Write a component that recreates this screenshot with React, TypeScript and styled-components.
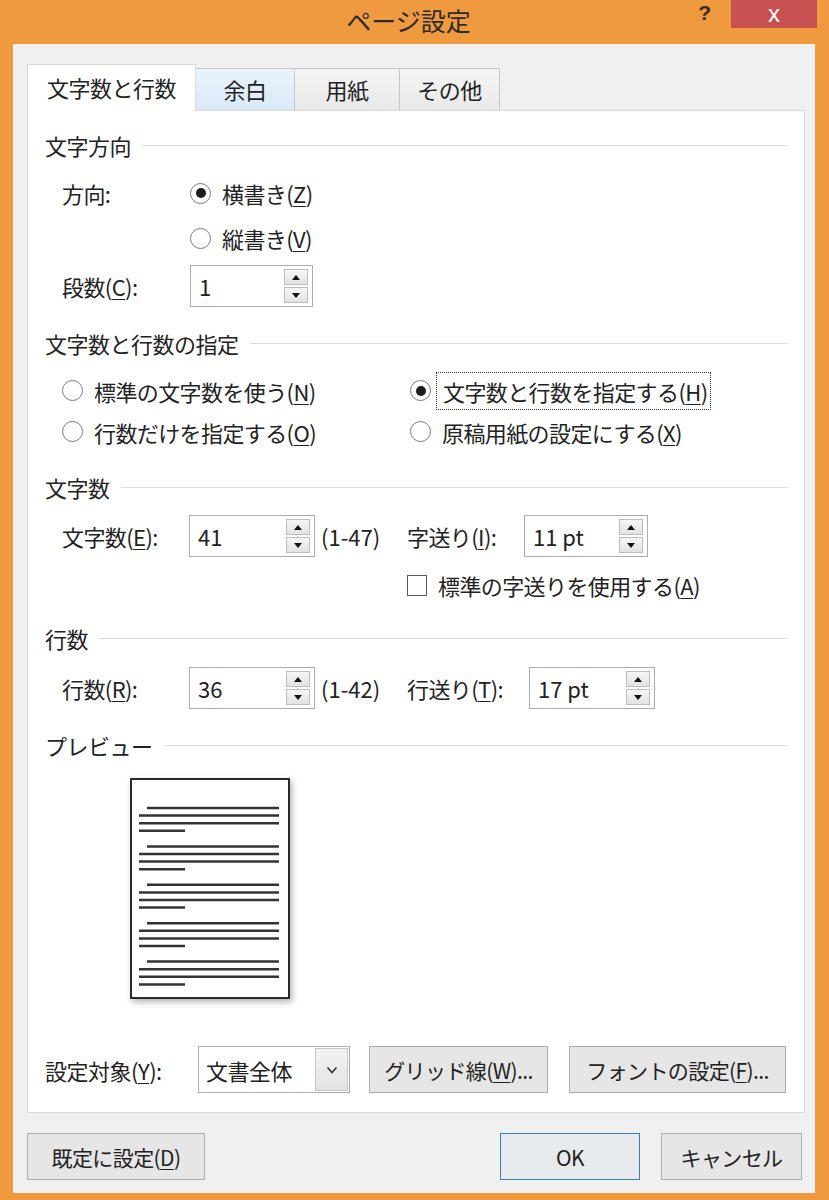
import React from "react";
import styled, { createGlobalStyle } from "styled-components";

const Global = createGlobalStyle`
  html, body { margin: 0; padding: 0; }
  body {
    font-family: "Noto Sans CJK JP", "Noto Sans", sans-serif;
    background: #ef9a3e;
    color: #222;
  }
`;

const Window = styled.div`
  width: 829px;
  height: 1200px;
  background: #ef9a3e;
  display: flex;
  flex-direction: column;
  box-sizing: border-box;
`;

const TitleBar = styled.div`
  height: 44px;
  flex: none;
  display: grid;
  grid-template-columns: 1fr auto 1fr;
  padding-right: 12px;
`;

const Title = styled.div`
  grid-column: 2;
  font-size: 25px;
  line-height: 40px;
  color: #2b2b2b;
`;

const Controls = styled.div`
  grid-column: 3;
  display: flex;
  justify-content: flex-end;
  align-items: flex-start;
  gap: 20px;
`;

const HelpGlyph = styled.div`
  font-family: "Liberation Sans", sans-serif;
  font-weight: 700;
  font-size: 21px;
  line-height: 24px;
  color: #3b2a18;
  margin-top: 1px;
`;

const CloseButton = styled.div`
  width: 86px;
  height: 28px;
  background: #c75050;
  color: #fff;
  display: flex;
  align-items: center;
  justify-content: center;
  font-family: "Liberation Sans", sans-serif;
  font-size: 24px;
  line-height: 28px;
`;

const Client = styled.div`
  flex: 1;
  margin: 0 14px 7px 13px;
  background: #f0f0f0;
  padding: 20px 10px 13px 14px;
  display: flex;
  flex-direction: column;
  min-height: 0;
`;

const TabStrip = styled.div`
  height: 46px;
  flex: none;
  display: flex;
  align-items: flex-end;
`;

const Tab = styled.div<{ $active?: boolean; $hover?: boolean; $w: number }>`
  width: ${(p) => p.$w}px;
  height: ${(p) => (p.$active ? 47 : 42)}px;
  margin-bottom: ${(p) => (p.$active ? -1 : 0)}px;
  margin-left: ${(p) => (p.$active ? 0 : -1)}px;
  box-sizing: border-box;
  border: 1px solid ${(p) => (p.$active ? "#d9d9d9" : "#c6c6c6")};
  border-bottom: none;
  background: ${(p) =>
    p.$active
      ? "#fff"
      : p.$hover
      ? "linear-gradient(#eaf3fc, #dbe9f7)"
      : "linear-gradient(#f5f5f5, #e9e9e9)"};
  display: flex;
  align-items: center;
  justify-content: center;
  padding-bottom: ${(p) => (p.$active ? 2 : 1)}px;
  font-size: 22px;
  letter-spacing: -0.5px;
  position: relative;
  z-index: ${(p) => (p.$active ? 2 : 1)};
`;

const Panel = styled.div`
  flex: 1;
  background: #fff;
  border: 1px solid #d9d9d9;
  box-sizing: border-box;
  padding: 19px 16px 19px 17px;
  display: flex;
  flex-direction: column;
  position: relative;
  z-index: 1;
`;

const SectionHeader = styled.div<{ $mt?: number }>`
  height: 30px;
  margin-top: ${(p) => p.$mt ?? 0}px;
  display: flex;
  align-items: center;
  gap: 11px;
  font-size: 22px;
  letter-spacing: -0.5px;
  white-space: nowrap;
  &::after {
    content: "";
    flex: 1;
    height: 1px;
    background: #dcdcdc;
  }
`;

const Row = styled.div<{ $h?: number; $mt?: number; $indent?: number }>`
  height: ${(p) => p.$h ?? 44}px;
  margin-top: ${(p) => p.$mt ?? 0}px;
  padding-left: ${(p) => p.$indent ?? 17}px;
  display: flex;
  align-items: center;
  font-size: 22px;
  letter-spacing: -0.6px;
  white-space: nowrap;
`;

const FieldLabel = styled.div<{ $w: number }>`
  width: ${(p) => p.$w}px;
  flex: none;
`;

const U = styled.span`
  text-decoration: underline;
  text-underline-offset: 3px;
  text-decoration-thickness: 1px;
`;

const Option = styled.div<{ $w?: number }>`
  display: flex;
  align-items: center;
  width: ${(p) => (p.$w ? `${p.$w}px` : "auto")};
  flex: none;
`;

const RadioCircle = styled.span<{ $checked?: boolean }>`
  width: 21px;
  height: 21px;
  box-sizing: border-box;
  border: 1.5px solid #7a7a7a;
  border-radius: 50%;
  background: #fff;
  display: inline-flex;
  align-items: center;
  justify-content: center;
  flex: none;
  &::after {
    content: "";
    width: 10px;
    height: 10px;
    border-radius: 50%;
    background: ${(p) => (p.$checked ? "#1c1c1c" : "transparent")};
  }
`;

const CheckSquare = styled.span`
  width: 20px;
  height: 21px;
  box-sizing: border-box;
  border: 1.5px solid #5a5a5a;
  background: #fff;
  flex: none;
`;

const OptionText = styled.span<{ $focus?: boolean }>`
  margin-left: ${(p) => (p.$focus ? 5 : 11)}px;
  padding: ${(p) => (p.$focus ? "2px 2px 2px 6px" : "0")};
  border: ${(p) => (p.$focus ? "1px dotted #333" : "none")};
`;

const SpinBox = styled.div<{ $w: number }>`
  width: ${(p) => p.$w}px;
  height: 42px;
  box-sizing: border-box;
  border: 1px solid #acacac;
  background: #fff;
  display: flex;
  align-items: stretch;
  flex: none;
`;

const SpinValue = styled.div`
  flex: 1;
  padding-left: 8px;
  display: flex;
  align-items: center;
  font-size: 22px;
  letter-spacing: 0;
`;

const SpinButtons = styled.div`
  width: 24px;
  margin: 3px 4px 3px 0;
  display: flex;
  flex-direction: column;
  gap: 2px;
`;

const SpinButton = styled.div<{ $down?: boolean }>`
  flex: 1;
  box-sizing: border-box;
  border: 1px solid #bdbdbd;
  background: linear-gradient(#f6f6f6, #e2e2e2);
  display: flex;
  align-items: center;
  justify-content: center;
  &::after {
    content: "";
    width: 0;
    height: 0;
    border-left: 4.5px solid transparent;
    border-right: 4.5px solid transparent;
    ${(p) =>
      p.$down ? "border-top: 5px solid #111;" : "border-bottom: 5px solid #111;"}
  }
`;

const RangeText = styled.div<{ $w: number }>`
  width: ${(p) => p.$w}px;
  padding-left: 6px;
  box-sizing: border-box;
  flex: none;
  letter-spacing: 0;
`;

const PreviewPage = styled.div`
  margin: 18px 0 0 85px;
  width: 160px;
  height: 221px;
  box-sizing: border-box;
  border: 2px solid #2a2a2a;
  background: #fff;
  box-shadow: 2px 3px 6px rgba(0, 0, 0, 0.3);
  flex: none;
`;

const BottomRow = styled.div`
  margin-top: auto;
  height: 47px;
  display: flex;
  align-items: center;
  font-size: 22px;
  letter-spacing: -0.5px;
  white-space: nowrap;
`;

const Select = styled.div`
  width: 152px;
  height: 47px;
  box-sizing: border-box;
  border: 1px solid #acacac;
  background: #fff;
  display: flex;
  flex: none;
`;

const SelectText = styled.div`
  flex: 1;
  padding-left: 7px;
  display: flex;
  align-items: center;
`;

const SelectArrow = styled.div`
  width: 31px;
  margin: 1px;
  border: 1px solid #c7c7c7;
  background: linear-gradient(#f3f3f3, #e3e3e3);
  display: flex;
  align-items: center;
  justify-content: center;
`;

const Button = styled.div<{ $w: number; $ml?: number; $primary?: boolean }>`
  width: ${(p) => p.$w}px;
  height: 47px;
  margin-left: ${(p) => p.$ml ?? 0}px;
  box-sizing: border-box;
  border: 1px solid ${(p) => (p.$primary ? "#3c7fb1" : "#adadad")};
  background: ${(p) => (p.$primary ? "#e8ebee" : "#e6e6e6")};
  display: flex;
  align-items: center;
  justify-content: center;
  font-size: 21px;
  letter-spacing: -0.6px;
  white-space: nowrap;
  flex: none;
`;

const DialogButtons = styled.div`
  margin-top: 20px;
  height: 47px;
  flex: none;
  display: flex;
  align-items: center;
  padding-right: 3px;
`;

const Spacer = styled.div`
  flex: 1;
`;

function Radio({ checked, focus, children, w }: { checked?: boolean; focus?: boolean; children: React.ReactNode; w?: number }) {
  return (
    <Option $w={w}>
      <RadioCircle $checked={checked} />
      <OptionText $focus={focus}>{children}</OptionText>
    </Option>
  );
}

function Spinner({ value, w }: { value: string; w: number }) {
  return (
    <SpinBox $w={w}>
      <SpinValue>{value}</SpinValue>
      <SpinButtons>
        <SpinButton />
        <SpinButton $down />
      </SpinButtons>
    </SpinBox>
  );
}

function PreviewLines() {
  const groups = [0, 1, 2, 3, 4];
  return (
    <svg width="156" height="217" viewBox="0 0 156 217">
      {groups.map((g) => {
        const y = 28 + g * 38.4;
        return (
          <g key={g} stroke="#333" strokeWidth="2.5">
            <line x1="15" y1={y} x2="147" y2={y} />
            <line x1="7" y1={y + 7.6} x2="147" y2={y + 7.6} />
            <line x1="7" y1={y + 15.2} x2="147" y2={y + 15.2} />
            <line x1="7" y1={y + 22.8} x2="53" y2={y + 22.8} />
          </g>
        );
      })}
    </svg>
  );
}

export default function App() {
  return (
    <>
      <Global />
      <Window>
        <TitleBar>
          <Title>ページ設定</Title>
          <Controls>
            <HelpGlyph>?</HelpGlyph>
            <CloseButton>x</CloseButton>
          </Controls>
        </TitleBar>
        <Client>
          <TabStrip>
            <Tab $active $w={169}>文字数と行数</Tab>
            <Tab $hover $w={100}>余白</Tab>
            <Tab $w={106}>用紙</Tab>
            <Tab $w={101}>その他</Tab>
          </TabStrip>
          <Panel>
            <SectionHeader>文字方向</SectionHeader>
            <Row $mt={11}>
              <FieldLabel $w={128}>方向:</FieldLabel>
              <Radio checked>横書き(<U>Z</U>)</Radio>
            </Row>
            <Row $mt={1}>
              <FieldLabel $w={128} />
              <Radio>縦書き(<U>V</U>)</Radio>
            </Row>
            <Row $mt={4}>
              <FieldLabel $w={128}>段数(<U>C</U>):</FieldLabel>
              <Spinner value="1" w={123} />
            </Row>

            <SectionHeader $mt={20}>文字数と行数の指定</SectionHeader>
            <Row $h={41} $mt={12}>
              <Radio w={348}>標準の文字数を使う(<U>N</U>)</Radio>
              <Radio checked focus>文字数と行数を指定する(<U>H</U>)</Radio>
            </Row>
            <Row $h={41} $mt={0}>
              <Radio w={348}>行数だけを指定する(<U>O</U>)</Radio>
              <Radio>原稿用紙の設定にする(<U>X</U>)</Radio>
            </Row>

            <SectionHeader $mt={20}>文字数</SectionHeader>
            <Row $mt={12}>
              <FieldLabel $w={127}>文字数(<U>E</U>):</FieldLabel>
              <Spinner value="41" w={126} />
              <RangeText $w={92}>(1-47)</RangeText>
              <FieldLabel $w={117}>字送り(<U>I</U>):</FieldLabel>
              <Spinner value="11 pt" w={124} />
            </Row>
            <Row $mt={5} $indent={362}>
              <Option>
                <CheckSquare />
                <OptionText>標準の字送りを使用する(<U>A</U>)</OptionText>
              </Option>
            </Row>

            <SectionHeader $mt={16}>行数</SectionHeader>
            <Row $mt={13}>
              <FieldLabel $w={127}>行数(<U>R</U>):</FieldLabel>
              <Spinner value="36" w={126} />
              <RangeText $w={92}>(1-42)</RangeText>
              <FieldLabel $w={122}>行送り(<U>T</U>):</FieldLabel>
              <Spinner value="17 pt" w={126} />
            </Row>

            <SectionHeader $mt={20}>プレビュー</SectionHeader>
            <PreviewPage>
              <PreviewLines />
            </PreviewPage>

            <BottomRow>
              <FieldLabel $w={153}>設定対象(<U>Y</U>):</FieldLabel>
              <Select>
                <SelectText>文書全体</SelectText>
                <SelectArrow>
                  <svg width="12" height="8" viewBox="0 0 12 8">
                    <path d="M1.5 1.5 L6 6.5 L10.5 1.5" fill="none" stroke="#333" strokeWidth="1.6" />
                  </svg>
                </SelectArrow>
              </Select>
              <Button $w={179} $ml={19}>グリッド線(<U>W</U>)...</Button>
              <Button $w={217} $ml={21}>フォントの設定(<U>F</U>)...</Button>
            </BottomRow>
          </Panel>
          <DialogButtons>
            <Button $w={178}>既定に設定(<U>D</U>)</Button>
            <Spacer />
            <Button $w={140} $primary>OK</Button>
            <Button $w={141} $ml={21}>キャンセル</Button>
          </DialogButtons>
        </Client>
      </Window>
    </>
  );
}
